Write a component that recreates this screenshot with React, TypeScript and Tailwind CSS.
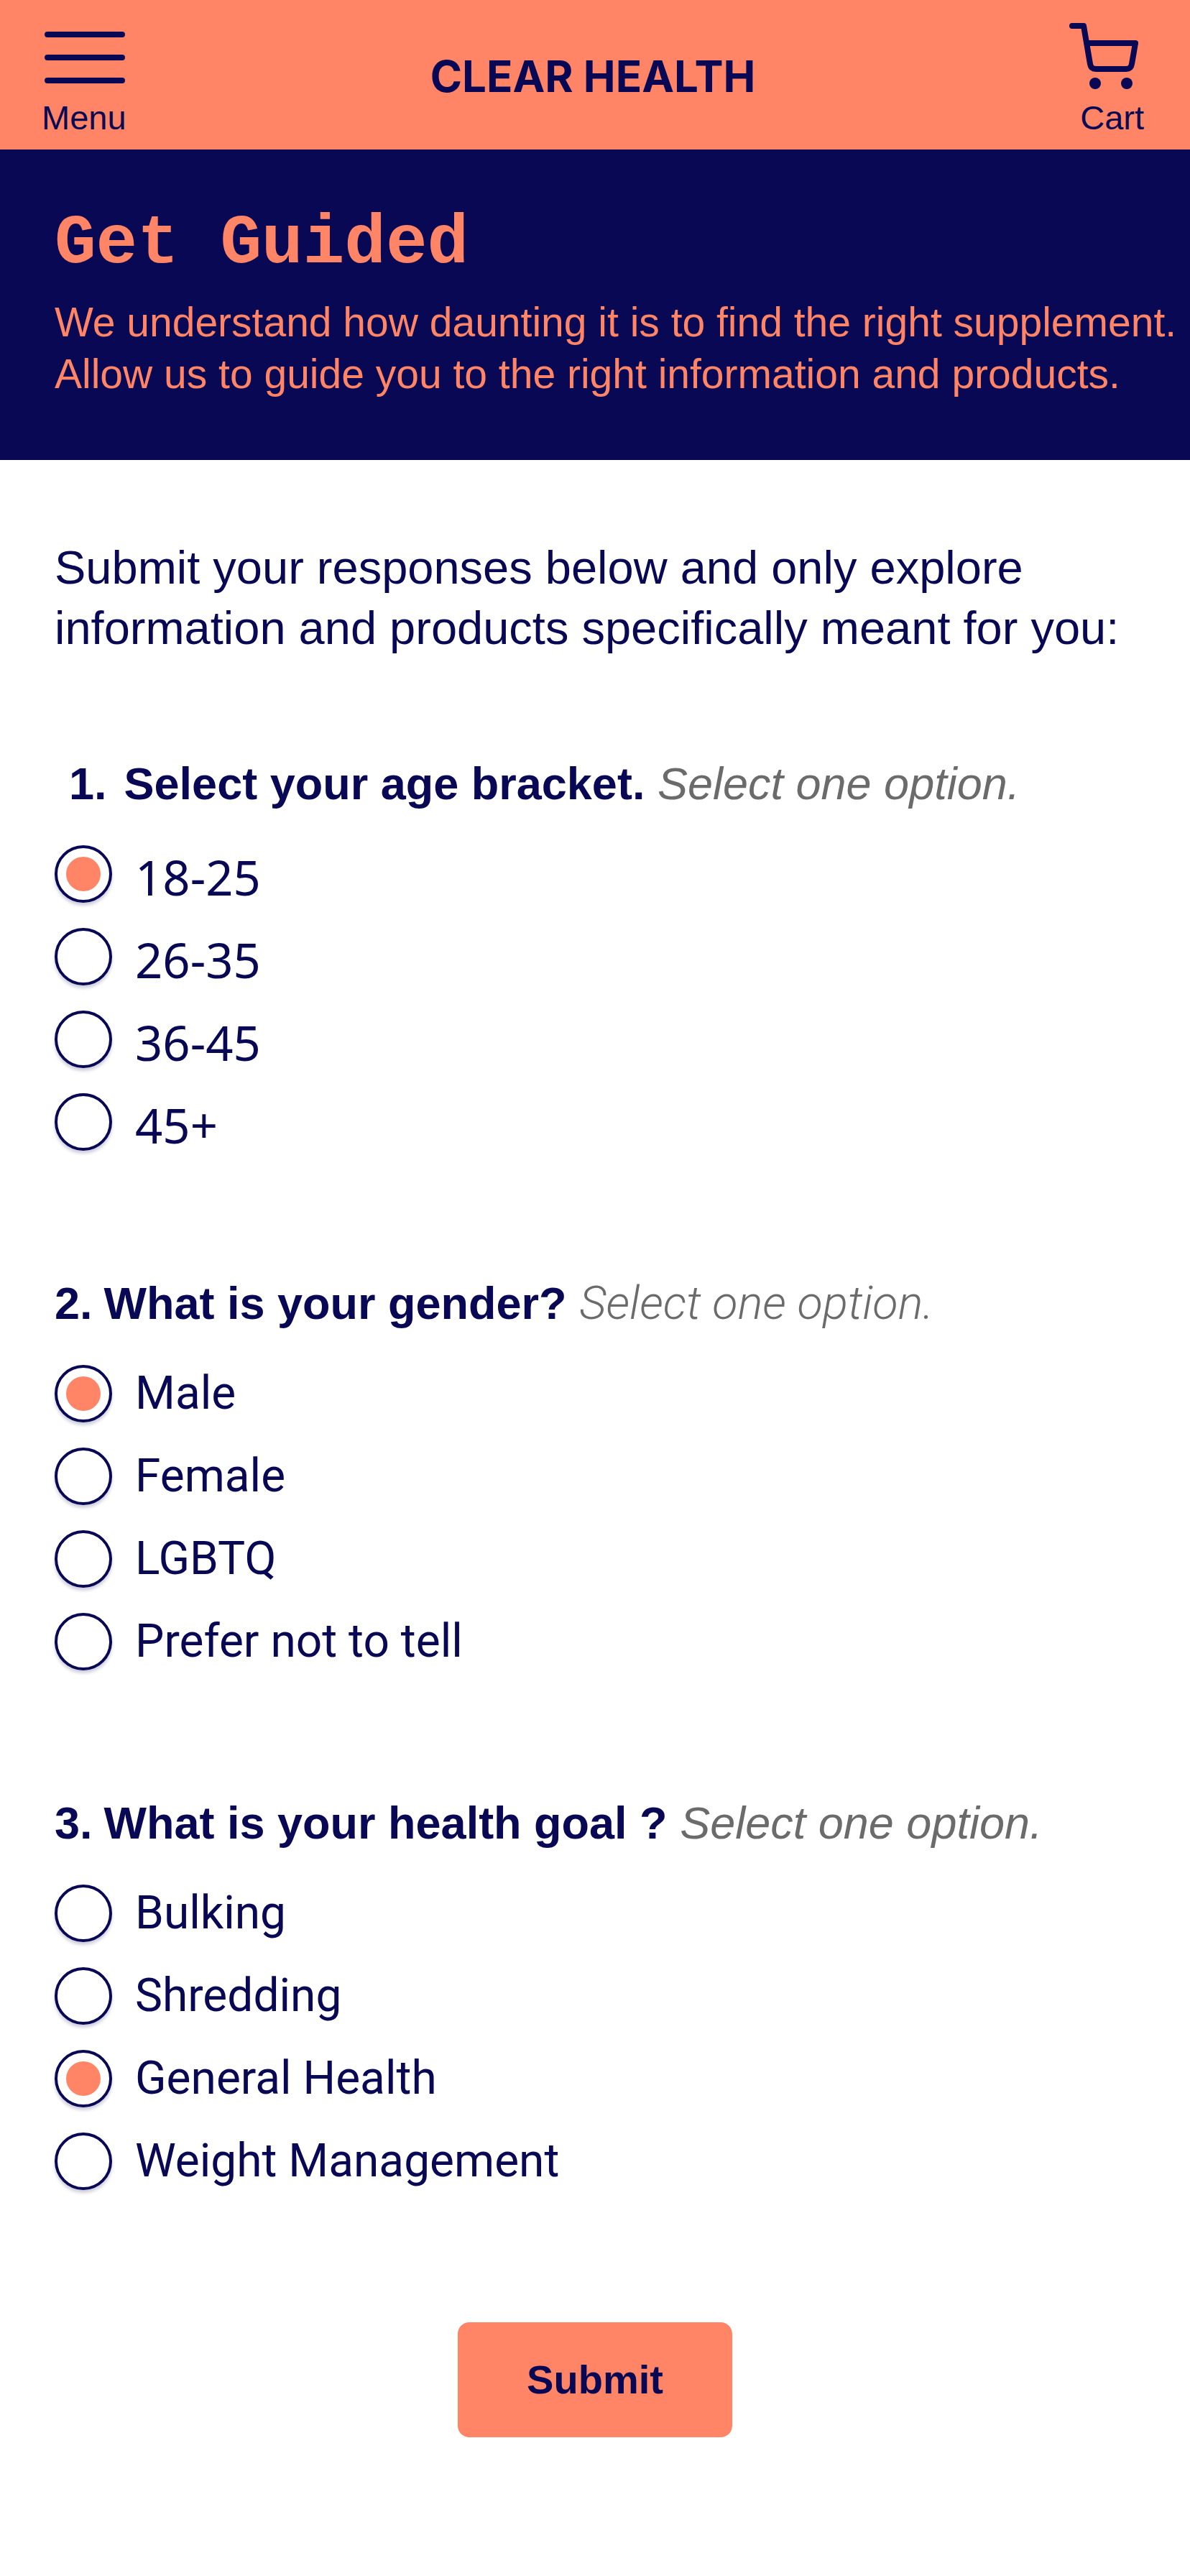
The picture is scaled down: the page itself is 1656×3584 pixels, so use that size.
import { useState } from 'react';
import type { FormEvent } from 'react';

interface Question {
  id: string;
  number: string;
  title: string;
  options: string[];
  legendClass: string;
  titleClass: string;
  hintClass: string;
  optionClass: string;
}

const questions: Question[] = [
  {
    id: 'age',
    number: '1.',
    title: 'Select your age bracket.',
    options: ['18-25', '26-35', '36-45', '45+'],
    legendClass: 'pl-5',
    titleClass: 'ml-6',
    hintClass: 'text-[63px]',
    optionClass: "pt-2 font-['Noto_Sans',sans-serif] text-[67px]",
  },
  {
    id: 'gender',
    number: '2.',
    title: 'What is your gender?',
    options: ['Male', 'Female', 'LGBTQ', 'Prefer not to tell'],
    legendClass: '',
    titleClass: 'ml-4',
    hintClass: "font-['Roboto',sans-serif] text-[65px] font-light",
    optionClass: "font-['Roboto',sans-serif] text-[64px]",
  },
  {
    id: 'goal',
    number: '3.',
    title: 'What is your health goal ?',
    options: ['Bulking', 'Shredding', 'General Health', 'Weight Management'],
    legendClass: '',
    titleClass: 'ml-4',
    hintClass: 'text-[63px]',
    optionClass: "font-['Roboto',sans-serif] text-[64px]",
  },
];

function Header() {
  return (
    <header className="grid h-52 grid-cols-[1fr_auto_1fr] items-start bg-[#ff8566] pl-[58px] pr-16">
      <button type="button" className="flex flex-col items-start justify-self-start pt-10">
        <svg viewBox="0 0 120 80" className="h-20 w-[120px]" fill="none" stroke="currentColor" strokeWidth="8" strokeLinecap="round">
          <path d="M8 8h104M8 40h104M8 72h104" />
        </svg>
        <span className="mt-4 text-[47px] leading-[56px]">Menu</span>
      </button>

      <h1 className="pt-[66px] font-['Inter',sans-serif] text-[60px] font-bold leading-20">CLEAR HEALTH</h1>

      <button type="button" className="flex flex-col items-end justify-self-end pt-6">
        <svg viewBox="0 0 104 104" className="size-[104px]" fill="none" stroke="currentColor" strokeWidth="8" strokeLinecap="round" strokeLinejoin="round">
          <path d="M4 12h16l9 53q1 7 8 7h42q7 0 8-7l5-29H24" />
          <circle cx="36" cy="92" r="8" fill="currentColor" stroke="none" />
          <circle cx="80" cy="92" r="8" fill="currentColor" stroke="none" />
        </svg>
        <span className="mt-2 text-[47px] leading-[56px]">Cart</span>
      </button>
    </header>
  );
}

export default function App() {
  const [answers, setAnswers] = useState<Record<string, string>>({
    age: '18-25',
    gender: 'Male',
    goal: 'General Health',
  });

  const handleSubmit = (e: FormEvent) => {
    e.preventDefault();
  };

  return (
    <div className="min-h-screen bg-white font-['Liberation_Sans',sans-serif] text-[#080854]">
      <Header />

      {/* Banner */}
      <section className="bg-[#080854] pb-[84px] pl-[76px] pt-[76px] text-[#ff8566]">
        <h2 className="font-['Liberation_Mono',monospace] text-[96px] font-bold leading-[112px]">Get Guided</h2>
        <p className="mt-4 text-[57px] leading-[72px]">
          We understand how daunting it is to find the right supplement.
          <br />
          Allow us to guide you to the right information and products.
        </p>
      </section>

      <form onSubmit={handleSubmit} className="px-[76px] pb-48 pt-[108px]">
        <p className="text-[65px] leading-[84px]">
          Submit your responses below and only explore
          <br />
          information and products specifically meant for you:
        </p>

        {/* Questions */}
        <div className="mt-[132px] flex flex-col gap-[170px]">
          {questions.map((q) => (
            <fieldset key={q.id}>
              <legend className={`text-[63px] leading-[84px] ${q.legendClass}`}>
                <b>{q.number}</b>
                <b className={q.titleClass}>{q.title}</b>{' '}
                <i className={`text-[#6b6b6b] ${q.hintClass}`}>Select one option.</i>
              </legend>
              <div className="mt-11 flex flex-col items-start gap-[35px]">
                {q.options.map((option) => (
                  <label key={option} className="flex h-20 items-center gap-8">
                    <input
                      type="radio"
                      name={q.id}
                      value={option}
                      checked={answers[q.id] === option}
                      onChange={() => setAnswers({ ...answers, [q.id]: option })}
                      className="grid size-20 shrink-0 appearance-none place-content-center rounded-full border-4 border-[#080854] bg-white shadow-[0_4px_4px_rgba(8,8,84,0.2)] before:size-12 before:rounded-full before:content-[''] checked:before:bg-[#ff8566]"
                    />
                    <span className={`leading-20 ${q.optionClass}`}>{option}</span>
                  </label>
                ))}
              </div>
            </fieldset>
          ))}
        </div>

        <div className="mt-[184px] flex justify-center">
          <button type="submit" className="rounded-2xl bg-[#ff8566] px-24 py-10 text-[56px] font-bold leading-20">
            Submit
          </button>
        </div>
      </form>
    </div>
  );
}
